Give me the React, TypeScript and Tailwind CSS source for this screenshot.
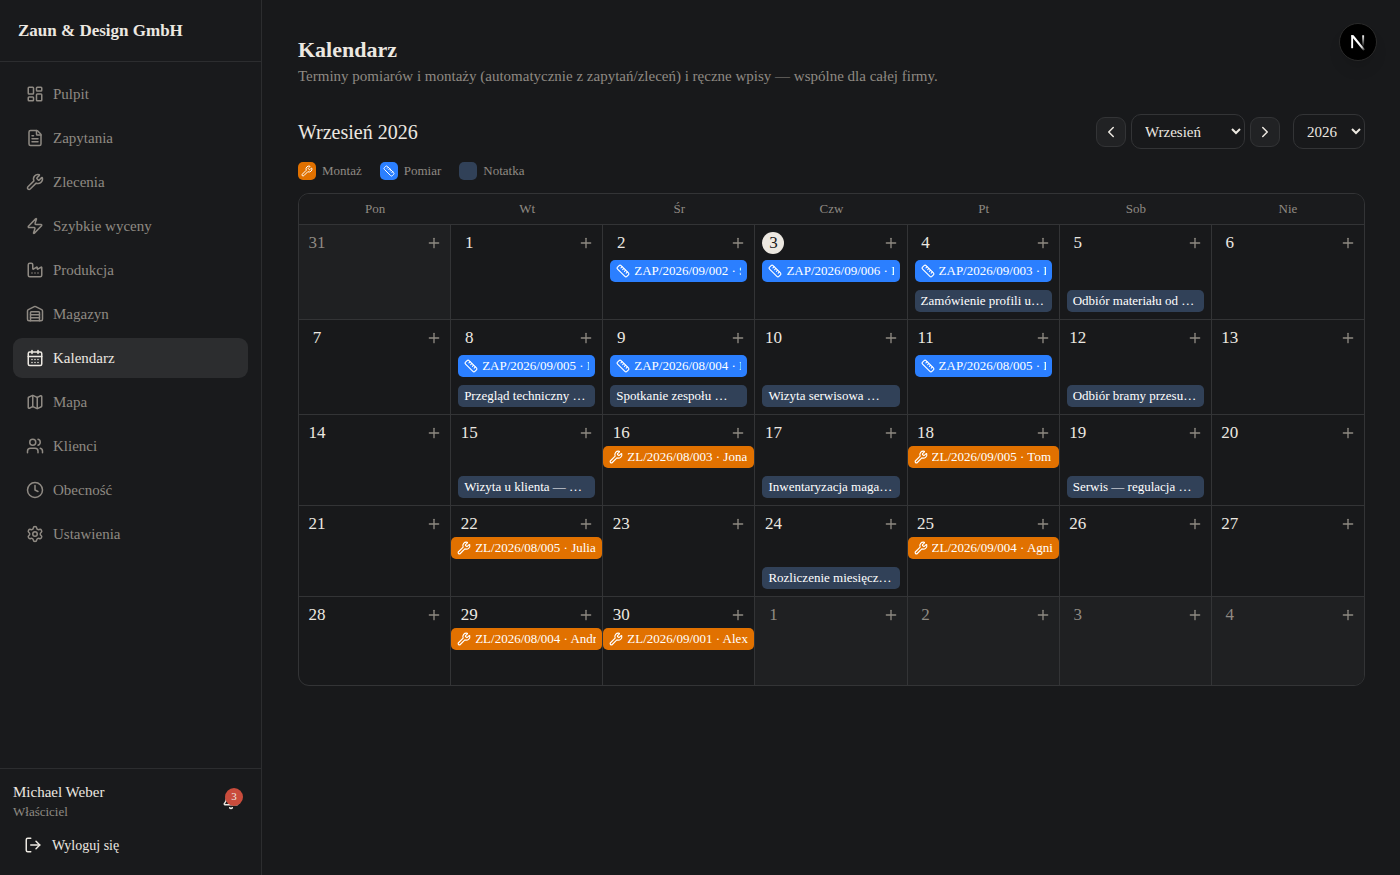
import {
  Bell,
  CalendarDays,
  ChevronLeft,
  ChevronRight,
  Clock,
  Factory,
  FileText,
  LayoutDashboard,
  LogOut,
  Map as MapIcon,
  Plus,
  Ruler,
  Settings,
  Users,
  Warehouse,
  Wrench,
  Zap,
  type LucideIcon,
} from "lucide-react";

const NAV: { label: string; icon: LucideIcon; active?: boolean }[] = [
  { label: "Pulpit", icon: LayoutDashboard },
  { label: "Zapytania", icon: FileText },
  { label: "Zlecenia", icon: Wrench },
  { label: "Szybkie wyceny", icon: Zap },
  { label: "Produkcja", icon: Factory },
  { label: "Magazyn", icon: Warehouse },
  { label: "Kalendarz", icon: CalendarDays, active: true },
  { label: "Mapa", icon: MapIcon },
  { label: "Klienci", icon: Users },
  { label: "Obecność", icon: Clock },
  { label: "Ustawienia", icon: Settings },
];

const WEEKDAYS = ["Pon", "Wt", "Śr", "Czw", "Pt", "Sob", "Nie"];

const MONTHS = [
  "Styczeń", "Luty", "Marzec", "Kwiecień", "Maj", "Czerwiec",
  "Lipiec", "Sierpień", "Wrzesień", "Październik", "Listopad", "Grudzień",
];

type Day = {
  n: number;
  outside?: boolean;
  today?: boolean;
  measure?: string;
  install?: string;
  note?: string;
};

const WEEKS: Day[][] = [
  [
    { n: 31, outside: true },
    { n: 1 },
    { n: 2, measure: "ZAP/2026/09/002 · S" },
    { n: 3, today: true, measure: "ZAP/2026/09/006 · K" },
    { n: 4, measure: "ZAP/2026/09/003 · K", note: "Zamówienie profili u…" },
    { n: 5, note: "Odbiór materiału od …" },
    { n: 6 },
  ],
  [
    { n: 7 },
    { n: 8, measure: "ZAP/2026/09/005 · M", note: "Przegląd techniczny …" },
    { n: 9, measure: "ZAP/2026/08/004 · M", note: "Spotkanie zespołu …" },
    { n: 10, note: "Wizyta serwisowa …" },
    { n: 11, measure: "ZAP/2026/08/005 · P" },
    { n: 12, note: "Odbiór bramy przesu…" },
    { n: 13 },
  ],
  [
    { n: 14 },
    { n: 15, note: "Wizyta u klienta — …" },
    { n: 16, install: "ZL/2026/08/003 · Jona" },
    { n: 17, note: "Inwentaryzacja maga…" },
    { n: 18, install: "ZL/2026/09/005 · Tom" },
    { n: 19, note: "Serwis — regulacja …" },
    { n: 20 },
  ],
  [
    { n: 21 },
    { n: 22, install: "ZL/2026/08/005 · Julia" },
    { n: 23 },
    { n: 24, note: "Rozliczenie miesięcz…" },
    { n: 25, install: "ZL/2026/09/004 · Agni" },
    { n: 26 },
    { n: 27 },
  ],
  [
    { n: 28 },
    { n: 29, install: "ZL/2026/08/004 · Andr" },
    { n: 30, install: "ZL/2026/09/001 · Alex" },
    { n: 1, outside: true },
    { n: 2, outside: true },
    { n: 3, outside: true },
    { n: 4, outside: true },
  ],
];

function Sidebar() {
  return (
    <aside className="flex w-[262px] shrink-0 flex-col border-r border-[#2c2d2f] bg-[#191a1c]">
      <div className="flex h-[62px] items-center border-b border-[#2c2d2f] px-[18px] text-[17px] font-bold">
        Zaun &amp; Design GmbH
      </div>
      <nav className="flex flex-1 flex-col gap-1 px-[13px] pt-3">
        {NAV.map(({ label, icon: Icon, active }) => (
          <a
            key={label}
            href="#"
            aria-current={active ? "page" : undefined}
            className={
              active
                ? "flex h-10 items-center gap-[9px] rounded-[9px] bg-[#2c2d2f] px-[13px] text-[15px] text-[#ece8e1]"
                : "flex h-10 items-center gap-[9px] rounded-[9px] px-[13px] text-[15px] text-[#8f8a83]"
            }
          >
            <Icon size={18} />
            {label}
          </a>
        ))}
      </nav>
      <div className="border-t border-[#2c2d2f] px-[13px] pt-3 pb-[14px]">
        <div className="flex items-center justify-between">
          <div>
            <div className="text-[15px] leading-[22px]">Michael Weber</div>
            <div className="text-[13px] leading-[18px] text-[#8f8a83]">Właściciel</div>
          </div>
          <button
            type="button"
            aria-label="Powiadomienia"
            className="relative flex size-[35px] items-center justify-center rounded-[9px]"
          >
            <Bell size={18} />
            <span className="absolute top-1 right-[5px] flex size-[18px] items-center justify-center rounded-full bg-[#c94c3c] text-[11px] leading-none">
              3
            </span>
          </button>
        </div>
        <button type="button" className="mt-2 flex h-8 items-center gap-[10px] px-[11px] text-[14px]">
          <LogOut size={18} />
          Wyloguj się
        </button>
      </div>
    </aside>
  );
}

function Toolbar() {
  const arrow =
    "flex size-[30px] items-center justify-center rounded-[9px] border border-[#333436] bg-[#212224]";
  const select =
    "h-[35px] rounded-[10px] border border-[#333436] bg-[#18191b] px-[9px] text-[15px] text-[#ece8e1]";
  return (
    <div className="mt-[26px] flex items-center justify-between">
      <h2 className="text-[20px] leading-7">Wrzesień 2026</h2>
      <div className="flex items-center gap-[5px]">
        <button type="button" aria-label="Poprzedni miesiąc" className={arrow}>
          <ChevronLeft size={18} />
        </button>
        <select aria-label="Miesiąc" defaultValue="Wrzesień" className={`${select} w-[114px]`}>
          {MONTHS.map((m) => (
            <option key={m}>{m}</option>
          ))}
        </select>
        <button type="button" aria-label="Następny miesiąc" className={arrow}>
          <ChevronRight size={18} />
        </button>
        <select aria-label="Rok" defaultValue="2026" className={`${select} ml-2 w-[72px]`}>
          {["2025", "2026", "2027"].map((y) => (
            <option key={y}>{y}</option>
          ))}
        </select>
      </div>
    </div>
  );
}

function Legend() {
  const box = "flex size-[18px] items-center justify-center rounded-[5px]";
  return (
    <ul className="mt-[13px] flex gap-[18px] text-[13px] leading-[18px] text-[#8f8a83]">
      <li className="flex gap-[6px]">
        <span className={`${box} bg-[#e17100] text-white`}>
          <Wrench size={12} />
        </span>
        Montaż
      </li>
      <li className="flex gap-[6px]">
        <span className={`${box} bg-[#2b7fff] text-white`}>
          <Ruler size={12} />
        </span>
        Pomiar
      </li>
      <li className="flex gap-[6px]">
        <span className={`${box} bg-[#314158]`} />
        Notatka
      </li>
    </ul>
  );
}

function DayContent({ day, roomy, hasNotes }: { day: Day; roomy: boolean; hasNotes: boolean }) {
  const bar =
    "flex h-[22px] items-center gap-1 overflow-hidden rounded-[5px] text-left text-[13px] leading-[22px] whitespace-nowrap text-white";
  return (
    <div className="flex flex-col pt-[7px]">
      <div className="flex items-center justify-between px-[7px]">
        <span
          className={
            day.today
              ? "flex size-[22px] items-center justify-center rounded-full bg-[#ece8e1] text-[#18191b]"
              : day.outside
                ? "flex size-[22px] items-center justify-center text-[#8f8a83]"
                : "flex size-[22px] items-center justify-center"
          }
        >
          {day.n}
        </span>
        <button
          type="button"
          aria-label={`Dodaj wpis: ${day.n}`}
          className="flex size-[18px] items-center justify-center text-[#8f8a83]"
        >
          <Plus size={16} />
        </button>
      </div>
      <div className={roomy ? "mt-[6px] flex h-[22px] flex-col" : "mt-[2px] flex h-[22px] flex-col"}>
        {day.measure && (
          <button type="button" className={`${bar} mx-[7px] bg-[#2b7fff] px-[6px]`}>
            <Ruler size={14} className="shrink-0" />
            <span className="overflow-hidden">{day.measure}</span>
          </button>
        )}
        {day.install && (
          <button type="button" className={`${bar} bg-[#e17100] px-[6px]`}>
            <Wrench size={14} className="shrink-0" />
            <span className="overflow-hidden">{day.install}</span>
          </button>
        )}
      </div>
      {hasNotes && (
        <div className="mt-2 mb-[7px] flex h-[22px] flex-col px-[7px]">
          {day.note && (
            <button type="button" className={`${bar} bg-[#314158] px-[6px]`}>
              {day.note}
            </button>
          )}
        </div>
      )}
    </div>
  );
}

function Calendar() {
  return (
    <div className="mt-[13px] overflow-hidden rounded-[11px] border border-[#333436]">
      <table className="w-full table-fixed border-separate border-spacing-0">
        <thead>
          <tr>
            {WEEKDAYS.map((d) => (
              <th
                key={d}
                scope="col"
                className="h-[31px] border-b border-[#333436] bg-[#1a1b1d] p-0 text-center text-[13px] font-normal text-[#8f8a83]"
              >
                {d}
              </th>
            ))}
          </tr>
        </thead>
        <tbody className="text-[17px] leading-[22px]">
          {WEEKS.map((week, w) => {
            const roomy = week.some((d) => d.measure);
            const hasNotes = week.some((d) => d.note);
            const last = w === WEEKS.length - 1;
            return (
              <tr key={w}>
                {week.map((day, i) => (
                  <td
                    key={i}
                    className={[
                      "h-[88px] border-[#333436] p-0 align-top",
                      i < 6 ? "border-r" : "",
                      last ? "" : "border-b",
                      day.outside ? "bg-[#1f2022]" : "",
                    ].join(" ")}
                  >
                    <DayContent day={day} roomy={roomy} hasNotes={hasNotes} />
                  </td>
                ))}
              </tr>
            );
          })}
        </tbody>
      </table>
    </div>
  );
}

function DevBadge() {
  return (
    <button
      type="button"
      aria-label="Next.js"
      className="fixed top-[23px] right-[23px] flex size-[38px] items-center justify-center rounded-full border border-[#2a2a2a] bg-black shadow-lg"
    >
      <svg width="38" height="38" viewBox="0 0 38 38" fill="none" className="shrink-0">
        <defs>
          <linearGradient id="n-diagonal" x1="20" y1="20" x2="26" y2="28" gradientUnits="userSpaceOnUse">
            <stop stopColor="#fff" />
            <stop offset="0.5" stopColor="#fff" stopOpacity="0.85" />
            <stop offset="1" stopColor="#fff" stopOpacity="0" />
          </linearGradient>
          <linearGradient id="n-stem" x1="24" y1="12" x2="24" y2="24" gradientUnits="userSpaceOnUse">
            <stop stopColor="#fff" />
            <stop offset="1" stopColor="#fff" stopOpacity="0" />
          </linearGradient>
        </defs>
        <path d="M12.2 12.3 H14.1 V25.2 H12.2 Z" fill="#fff" />
        <path d="M12.2 12.3 H14.6 L26 26.6 L24.4 27.8 L12.2 12.9 Z" fill="url(#n-diagonal)" />
        <path d="M23.2 12.3 H25.1 V24 H23.2 Z" fill="url(#n-stem)" />
      </svg>
    </button>
  );
}

export default function App() {
  return (
    <div className="flex min-h-screen bg-[#18191b] font-['Liberation_Serif',serif] text-[#ece8e1]">
      <Sidebar />
      <main className="min-w-0 flex-1 py-9 pr-[35px] pl-9">
        <h1 className="text-[22px] leading-7 font-bold">Kalendarz</h1>
        <p className="text-[15px] leading-6 text-[#8f8a83]">
          Terminy pomiarów i montaży (automatycznie z zapytań/zleceń) i ręczne wpisy — wspólne dla całej firmy.
        </p>
        <Toolbar />
        <Legend />
        <Calendar />
      </main>
      <DevBadge />
    </div>
  );
}
